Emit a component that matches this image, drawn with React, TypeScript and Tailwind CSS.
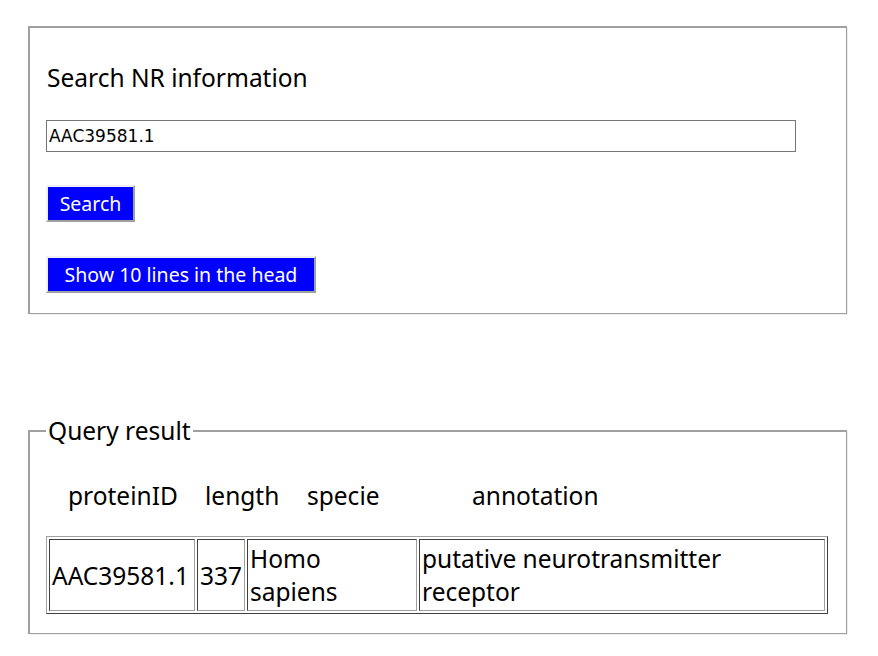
import React from 'react'

const font = { fontFamily: '"Noto Sans", "Open Sans", sans-serif' }

const cellCls =
  'px-[2px] align-middle border border-t-[#404040] border-l-[#404040] border-r-[#a0a0a0] border-b-[#a0a0a0]'

const BlueButton = ({ children, className }: { children: React.ReactNode; className?: string }) => (
  <button
    className={`block h-[37px] bg-[#0000ff] text-white text-[19.5px] leading-none border-2 border-t-[#f0f0f0] border-l-[#f0f0f0] border-r-[#a0a0a0] border-b-[#a0a0a0] ${className ?? ''}`}
  >
    {children}
  </button>
)

export default function App() {
  const rows = [{ id: 'AAC39581.1', length: '337', specie: 'Homo sapiens', annotation: 'putative neurotransmitter receptor' }]

  return (
    <div className="min-h-[656px] bg-white pt-[26px] pl-[28px] text-black" style={font}>
      {/* Search box */}
      <div className="w-[819px] h-[288px] border-t-2 border-l-2 border-r border-b border-[#a0a0a0] shadow-[1px_1px_0_#eeeeee] pl-[16px]">
        <h2 className="mt-[35px] ml-[1px] text-[24.5px] leading-[30px] font-normal">Search NR information</h2>
        <input
          defaultValue="AAC39581.1"
          className="mt-[27px] block w-[750px] h-[32px] border border-[#767676] px-[2px] text-[17px] outline-none"
          style={{ fontFamily: 'Tahoma, "DejaVu Sans", sans-serif' }}
        />
        <BlueButton className="mt-[33px] w-[89px]">Search</BlueButton>
        <BlueButton className="mt-[34px] w-[270px]">Show 10 lines in the head</BlueButton>
      </div>

      {/* Query result */}
      <fieldset className="mt-[102px] w-[819px] border-t-2 border-l-2 border-r border-b border-[#a0a0a0] shadow-[1px_1px_0_#eeeeee] pl-[16px] pb-[19px]">
        <legend className="px-[2px] text-[24.5px] leading-[30px]">Query result</legend>
        <div className="flex mt-[35px] text-[24.5px] leading-[30px]">
          <span className="ml-[22px] w-[137px]">proteinID</span>
          <span className="w-[102px]">length</span>
          <span className="w-[165px]">specie</span>
          <span>annotation</span>
        </div>
        <table className="mt-[25px] w-[782px] table-fixed border-separate border-spacing-[2px] border border-t-[#a0a0a0] border-l-[#a0a0a0] border-r-[#404040] border-b-[#404040] text-[24.5px] leading-[33px]">
          <colgroup>
            <col className="w-[146px]" />
            <col className="w-[48px]" />
            <col className="w-[170px]" />
            <col className="w-[406px]" />
          </colgroup>
          <tbody>
            {rows.map((r) => (
              <tr key={r.id}>
                <td className={`h-[72px] ${cellCls}`}>{r.id}</td>
                <td className={`${cellCls} px-[1px]`}>{r.length}</td>
                <td className={cellCls}>{r.specie}</td>
                <td className={cellCls}>{r.annotation}</td>
              </tr>
            ))}
          </tbody>
        </table>
      </fieldset>
    </div>
  )
}
